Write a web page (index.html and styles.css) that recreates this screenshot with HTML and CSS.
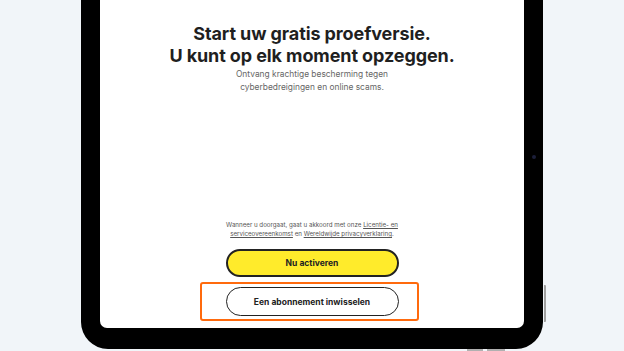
FILE: index.html
```html
<!DOCTYPE html>
<html lang="nl">
<head>
<meta charset="utf-8">
<title>Proefversie</title>
<link rel="stylesheet" href="styles.css">
</head>
<body>
<div class="stage">
  <div class="tablet">
    <span class="camera"></span>
    <span class="side-btn"></span>
    <span class="bottom-btn b1"></span>
    <span class="bottom-btn b2"></span>
    <div class="screen">
      <h1 class="title">Start uw gratis proefversie.<br>U kunt op elk moment opzeggen.</h1>
      <p class="subtitle">Ontvang krachtige bescherming tegen<br>cyberbedreigingen en online scams.</p>
      <div class="spacer"></div>
      <p class="legal">Wanneer u doorgaat, gaat u akkoord met onze <a href="#">Licentie- en</a><br><a href="#">serviceovereenkomst</a> en <a href="#">Wereldwijde privacyverklaring</a>.</p>
      <button class="btn btn-primary">Nu activeren</button>
      <div class="highlight-wrap">
        <button class="btn btn-secondary">Een abonnement inwisselen</button>
        <span class="highlight"></span>
      </div>
    </div>
  </div>
</div>
</body>
</html>
```
FILE: styles.css
```css
html, body {
  margin: 0;
  padding: 0;
  background: #f1f5f9;
  height: 351px;
  overflow: hidden;
  font-family: Inter, "Liberation Sans", sans-serif;
}
.stage {
  padding-left: 81px;
}
.tablet {
  position: relative;
  width: 424px;
  height: 330px;
  margin-top: -12px;
  border: 19px solid #000;
  border-bottom-width: 21px;
  border-top-width: 10px;
  border-radius: 0 0 27px 27px;
  background: #000;
}
.camera {
  position: absolute;
  right: -12px;
  top: 157px;
  width: 4px;
  height: 4px;
  border-radius: 50%;
  background: #1c1f3a;
}
.side-btn {
  position: absolute;
  right: -22px;
  top: 287px;
  width: 2px;
  height: 37px;
  background: #a0a0a0;
  border-radius: 0 1px 1px 0;
}
.bottom-btn {
  position: absolute;
  bottom: -23px;
  height: 2px;
  background: #b0b0b0;
}
.b1 { left: 367px; width: 16px; }
.b2 { left: 387px; width: 18px; }
.screen {
  height: 100%;
  box-sizing: border-box;
  background: #fff;
  border-radius: 0 0 7px 7px;
  display: flex;
  flex-direction: column;
  align-items: center;
  padding: 25px 0 12px;
  text-align: center;
}
.title {
  margin: 0;
  font-size: 18px;
  line-height: 22px;
  font-weight: 700;
  color: #1f1f1f;
  letter-spacing: -0.1px;
}
.subtitle {
  margin: 1px 0 0;
  font-size: 8.4px;
  line-height: 13px;
  color: #666;
}
.spacer { flex: 1; }
.legal {
  margin: 0 0 11px;
  white-space: nowrap;
  font-size: 6.2px;
  line-height: 9px;
  color: #555;
}
.legal a {
  color: #555;
  text-decoration: underline;
}
.btn {
  box-sizing: border-box;
  width: 173px;
  height: 28px;
  border-radius: 15px;
  font-family: Inter, "Liberation Sans", sans-serif;
  font-size: 8.5px;
  font-weight: 700;
  color: #222;
  cursor: pointer;
}
.btn-primary {
  background: #ffeb2b;
  border: 2px solid #222;
}
.highlight-wrap {
  position: relative;
  margin-top: 10px;
}
.btn-secondary {
  display: block;
  background: #fff;
  border: 1.5px solid #222;
  height: 29px;
}
.highlight {
  position: absolute;
  left: -26px;
  right: -20px;
  top: -5px;
  bottom: -5px;
  border: 2.5px solid #ff6a0d;
  border-radius: 3px;
}
```
